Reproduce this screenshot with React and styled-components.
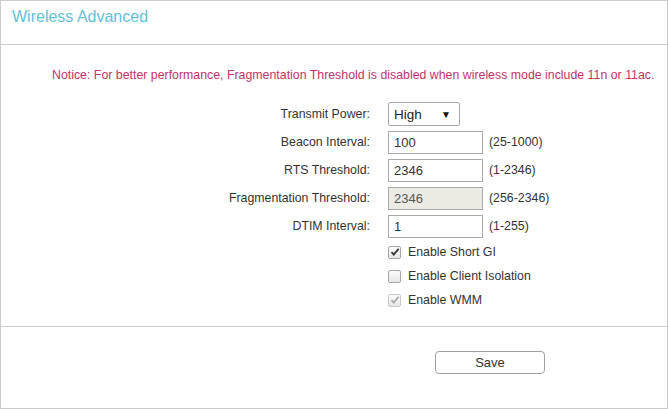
import styled, { createGlobalStyle } from "styled-components";

const Global = createGlobalStyle`
    html, body {
        margin: 0;
        padding: 0;
        background: #ffffff;
    }
    body {
        font-family: "Liberation Sans", Arial, sans-serif;
        color: #333333;
    }
`

const fields = [
    { label: "Beacon Interval:", value: "100", range: "(25-1000)" },
    { label: "RTS Threshold:", value: "2346", range: "(1-2346)" },
    { label: "Fragmentation Threshold:", value: "2346", range: "(256-2346)", disabled: true },
    { label: "DTIM Interval:", value: "1", range: "(1-255)" },
]

const options = [
    { label: "Enable Short GI", checked: true },
    { label: "Enable Client Isolation", checked: false },
    { label: "Enable WMM", checked: true, disabled: true },
]

function Check({ checked, disabled }) {
    return (
        <CheckBox disabled={disabled}>
            {checked && (
                <svg width="10" height="10" viewBox="0 0 10 10">
                    <path d="M1.5 5.2 L3.8 7.6 L8.6 1.8" fill="none"
                        stroke={disabled ? "#a8a8a8" : "#333"} strokeWidth="1.8" />
                </svg>
            )}
        </CheckBox>
    )
}

export default function App() {
    return (
        <>
            <Global />
            <Frame>
                <Header>
                    <Title>Wireless Advanced</Title>
                </Header>
                <Body>
                    <Notice>Notice: For better performance, Fragmentation Threshold is disabled when wireless mode include 11n or 11ac.</Notice>
                    <Form>
                        <Row>
                            <Label>Transmit Power:</Label>
                            <SelectBox>
                                <span>High</span>
                                <Arrow>▼</Arrow>
                            </SelectBox>
                        </Row>
                        {fields.map((f) => (
                            <Row key={f.label}>
                                <Label>{f.label}</Label>
                                <TextInput value={f.value} disabled={f.disabled} readOnly />
                                <Range>{f.range}</Range>
                            </Row>
                        ))}
                        {options.map((o) => (
                            <CheckRow key={o.label}>
                                <Label />
                                <Check checked={o.checked} disabled={o.disabled} />
                                <CheckLabel>{o.label}</CheckLabel>
                            </CheckRow>
                        ))}
                    </Form>
                </Body>
                <Footer>
                    <SaveButton>Save</SaveButton>
                </Footer>
            </Frame>
        </>
    )
}

const Frame = styled.div`
    width: 666px;
    height: 407px;
    border: 1px solid #cccccc;
    display: flex;
    flex-direction: column;
`

const Header = styled.div`
    height: 43px;
    border-bottom: 1px solid #cccccc;
    box-sizing: content-box;
`

const Title = styled.h1`
    margin: 0;
    padding: 7px 0 0 11px;
    font-size: 16px;
    font-weight: normal;
    line-height: 18px;
    color: #62c0d6;
`

const Body = styled.div`
    height: 281px;
    padding-top: 22px;
    box-sizing: border-box;
`

const Notice = styled.div`
    padding-left: 51px;
    font-size: 12.35px;
    line-height: 16px;
    color: #c4306a;
`

const Form = styled.div`
    margin-top: 17px;
    display: flex;
    flex-direction: column;
`

const Row = styled.div`
    height: 28px;
    display: flex;
    align-items: center;
`

const CheckRow = styled(Row)`
    height: 24px;
`

const Label = styled.div`
    width: 387px;
    flex-shrink: 0;
    padding-right: 18px;
    box-sizing: border-box;
    text-align: right;
    font-size: 12.35px;
    color: #333333;
`

const SelectBox = styled.div`
    width: 72px;
    height: 24px;
    box-sizing: border-box;
    border: 1px solid #a9a9a9;
    border-radius: 2px;
    display: flex;
    align-items: center;
    justify-content: space-between;
    padding: 0 8px 0 5px;
    font-size: 13.5px;
    color: #222222;
`

const Arrow = styled.span`
    font-size: 10px;
    color: #111111;
`

const TextInput = styled.input`
    width: 95px;
    height: 23px;
    box-sizing: border-box;
    margin: 0;
    border: 1px solid #a9a9a9;
    padding: 1px 5px 0;
    font-family: "Liberation Sans", Arial, sans-serif;
    font-size: 13px;
    color: ${(p) => (p.disabled ? "#555555" : "#333333")};
    background: ${(p) => (p.disabled ? "#ebebe4" : "#ffffff")};
    outline: none;
`

const Range = styled.span`
    margin-left: 6px;
    font-size: 12.35px;
    color: #333333;
`

const CheckBox = styled.span`
    width: 13px;
    height: 13px;
    box-sizing: border-box;
    border: 1px solid ${(p) => (p.disabled ? "#c8c8c8" : "#a6a6a6")};
    border-radius: 2px;
    background: linear-gradient(#fcfcfc, #e6e6e6);
    display: flex;
    align-items: center;
    justify-content: center;
`

const CheckLabel = styled.span`
    margin-left: 7px;
    font-size: 12.35px;
    color: #333333;
`

const Footer = styled.div`
    flex: 1;
    border-top: 1px solid #cccccc;
    padding: 24px 0 0 434px;
`

const SaveButton = styled.button`
    width: 110px;
    height: 23px;
    margin: 0;
    border: 1px solid #a0a0a0;
    border-radius: 4px;
    background: #ffffff;
    font-family: "Liberation Sans", Arial, sans-serif;
    font-size: 13px;
    color: #333333;
    padding: 0;
`
